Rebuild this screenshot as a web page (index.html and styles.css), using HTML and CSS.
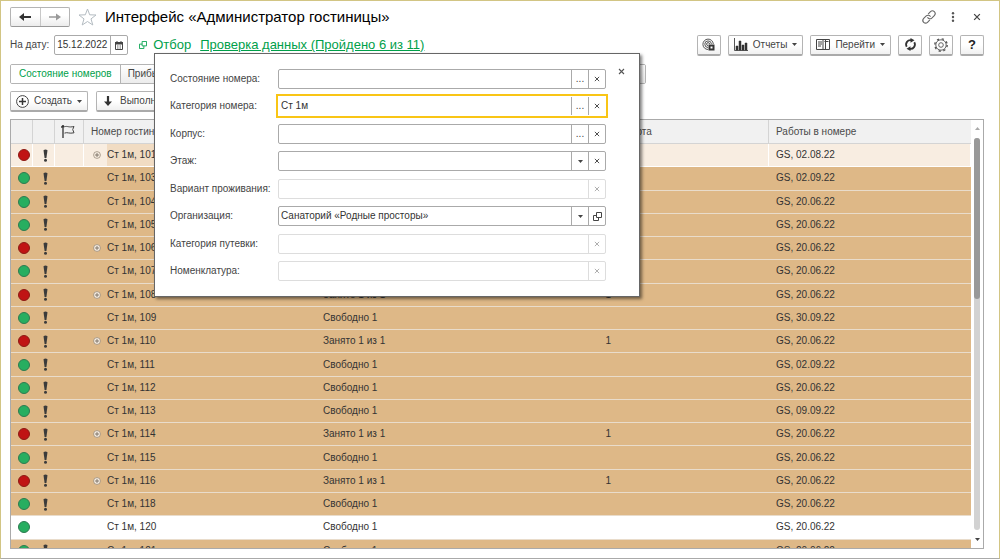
FILE: index.html
```html
<!DOCTYPE html>
<html lang="ru">
<head>
<meta charset="utf-8">
<title>Интерфейс «Администратор гостиницы»</title>
<link rel="stylesheet" href="styles.css">
</head>
<body>
<svg class="defs" aria-hidden="true">
  <symbol id="i-x" viewBox="0 0 7 7"><path d="M1 1l5 5M6 1l-5 5" fill="none" stroke="currentColor" stroke-width="1.1"/></symbol>
  <symbol id="i-down" viewBox="0 0 5 3"><path d="M0 0h5L2.500 3z" fill="currentColor"/></symbol>
  <symbol id="i-open" viewBox="0 0 9 9"><path d="M3.500.5h5v5h-5zM3.500 3.500h-3v5h5v-3" fill="none" stroke="currentColor"/></symbol>
  <symbol id="i-bang" viewBox="0 0 5 13"><path d="M.5 1.200Q2.500-.4 4.500 1.200L3.400 9H1.600z" fill="#3b3b3b"/><circle cx="2.500" cy="11.300" r="1.500" fill="#3b3b3b"/></symbol>
  <symbol id="i-plus" viewBox="0 0 8 8"><circle cx="4" cy="4" r="3.400" fill="#f8eee2" stroke="#8c8070" stroke-width=".7"/><path d="M4 2v4M2 4h4" stroke="#6b6155" stroke-width=".8"/></symbol>
</svg>
<main class="window">
  <header class="titlebar">
    <div class="nav">
      <button type="button" aria-label="Назад"><svg width="12" height="8" viewBox="0 0 12 8"><path d="M5 0v2.900h7v2.200H5V8L0 4z" fill="#333"/></svg></button>
      <button type="button" aria-label="Вперед" class="dim"><svg width="12" height="8" viewBox="0 0 12 8"><path d="M7 .5v2.700H0v1.600h7v2.700L12 4z" fill="#999"/></svg></button>
    </div>
    <button type="button" class="plain star" aria-label="В избранное"><svg width="19" height="18" viewBox="0 0 19 18"><path d="M9.500 1l2.200 5.800 6.300.2-5 3.900 1.800 6.100-5.300-3.500L4.200 17 6 10.900 1 7l6.300-.2z" fill="#fff" stroke="#b4bcc2"/></svg></button>
    <h1>Интерфейс «Администратор гостиницы»</h1>
    <div class="winicons">
      <button type="button" class="plain" aria-label="Ссылка"><svg width="14" height="14" viewBox="0 0 14 14"><g fill="none" stroke="#666" stroke-width="1.100" transform="rotate(-45 7 7)"><path d="M5.500 9.700H2.200a2.700 2.700 0 0 1 0-5.400h3.600a2.700 2.700 0 0 1 2.500 3.500"/><path d="M8.500 4.300h3.300a2.700 2.700 0 0 1 0 5.400H8.200a2.700 2.700 0 0 1-2.500-3.500"/></g></svg></button>
      <button type="button" class="plain" aria-label="Меню"><svg width="4" height="10" viewBox="0 0 4 10" fill="#555"><circle cx="2" cy="1.300" r="1.200"/><circle cx="2" cy="5" r="1.200"/><circle cx="2" cy="8.700" r="1.200"/></svg></button>
      <button type="button" class="plain" aria-label="Закрыть окно"><svg width="8" height="8"><use href="#i-x"/></svg></button>
    </div>
  </header>

  <div class="toolbar">
    <label for="date">На дату:</label>
    <div class="field date"><input id="date" type="text" value="15.12.2022"><button type="button" aria-label="Календарь"><svg width="8" height="9" viewBox="0 0 8 9"><path d="M.5 1.500h7v7h-7z" fill="#fff" stroke="#444"/><path d="M0 1h8v2.500H0zM1.500 0h1v1h-1zM5.500 0h1v1h-1z" fill="#444"/><path d="M2 5h1M3.500 5h1M5 5h1M2 7h1M3.500 7h1M5 7h1" stroke="#666"/></svg></button></div>
    <div class="links">
      <svg class="green" width="8" height="8"><use href="#i-open"/></svg>
      <a href="#filter" class="nolined">Отбор</a>
      <a href="#check">Проверка данных (Пройдено 6 из 11)</a>
    </div>
    <div class="actions">
      <button type="button" class="btn square" aria-label="Мониторинг"><svg width="13" height="13" viewBox="0 0 13 13"><g fill="none" stroke="#555"><path d="M6 11.500A5.200 5.200 0 1 1 11.300 6"/><path d="M6 9.500A3.300 3.300 0 1 1 9.400 6"/><path d="M6 7.600A1.500 1.500 0 1 1 7.600 6"/></g><rect x="6.500" y="6.500" width="6" height="6" fill="#333"/><rect x="8.500" y="8.500" width="2" height="2" fill="#fff"/></svg></button>
      <button type="button" class="btn"><svg width="14" height="13" viewBox="0 0 14 13"><path d="M.5 0v12.500H14" fill="none" stroke="#555"/><path d="M2 8h2v4H2zM5 3h2v9H5zM8 7h2v5H8zM11 5h2v7h-2z" fill="#333" stroke="#333" stroke-width=".5"/></svg>Отчеты<svg class="caret" width="5" height="3"><use href="#i-down"/></svg></button>
      <button type="button" class="btn"><svg width="14" height="11" viewBox="0 0 14 11"><path d="M.5.5h13v10H.5zM7 .5v10M9.500.5v10" fill="none" stroke="#444"/><path d="M2 3h4M2 5h4M2 7h3M8.500 2.500h4" stroke="#444"/></svg>Перейти<svg class="caret" width="5" height="3"><use href="#i-down"/></svg></button>
      <button type="button" class="btn square" aria-label="Обновить"><svg width="13" height="13" viewBox="0 0 13 13"><g fill="none" stroke="#333" stroke-width="1.800"><path d="M7.500 2.200A4.400 4.400 0 0 0 2.700 8.700"/><path d="M5.500 10.800A4.400 4.400 0 0 0 10.300 4.300"/></g><path d="M6.500 0l4 2.300-4 2.500zM6.500 8.200v4.800l-4-2.300z" fill="#333"/></svg></button>
      <button type="button" class="btn square" aria-label="Настройки"><svg width="14" height="14" viewBox="0 0 14 14"><g fill="none" stroke="#555"><circle cx="7" cy="7" r="5.200" stroke-width=".9"/><circle cx="7" cy="7" r="2.300" stroke-width=".9"/><circle cx="7" cy="7" r="6.200" stroke-width="1.400" stroke-dasharray="2.200 2.670"/></g></svg></button>
      <button type="button" class="btn square help" aria-label="Справка">?</button>
    </div>
  </div>

  <nav class="tabs">
    <button type="button" class="on">Состояние номеров</button>
    <button type="button">Прибытие</button>
    <button type="button">Проживание</button>
    <button type="button">Выезд</button>
    <button type="button">Бронирование</button>
  </nav>

  <div class="commands">
    <button type="button" class="btn"><svg width="13" height="13" viewBox="0 0 13 13"><circle cx="6.500" cy="6.500" r="5.900" fill="#fff" stroke="#444"/><path d="M6.500 3v7M3 6.500h7" stroke="#333" stroke-width="1.500"/></svg>Создать<svg class="caret" width="5" height="3"><use href="#i-down"/></svg></button>
    <button type="button" class="btn run"><svg width="8" height="10" viewBox="0 0 8 10"><path d="M2.900 0h2.200v5.500H8L4 10 0 5.500h2.900z" fill="#333"/></svg>Выполнить</button>
  </div>

  <section class="grid">
    <div class="clip">
      <table>
        <colgroup><col class="c1"><col class="c1"><col class="c3"><col><col class="cm"><col class="cm"><col class="cm"><col class="cw"></colgroup>
        <thead><tr><th></th><th></th><th><svg width="14" height="13" viewBox="0 0 14 13"><path d="M2 1v12M.3 2.500L2 .5l1.200 1.500" fill="none" stroke="#333" stroke-width="1.300"/><path d="M3.500 1.800c3-1.200 4 1 9.500-.3l-1.300 3L13 7.800c-5 1.200-6.500-1-9.500.3" fill="none" stroke="#444"/></svg></th><th class="name">Номер гостиницы</th><th>Состояние</th><th>Гостей</th><th>Карта</th><th>Работы в номере</th></tr></thead>
        <tbody id="rows"></tbody>
      </table>
    </div>
    <div class="scroll">
      <svg class="up" width="5" height="3"><use href="#i-down"/></svg>
      <div class="track"><div class="thumb"></div></div>
      <svg width="5" height="3"><use href="#i-down"/></svg>
    </div>
  </section>

  <form class="popup" id="filter">
    <button type="button" class="plain close" aria-label="Закрыть"><svg width="7" height="7"><use href="#i-x"/></svg></button>
    <div class="row"><label for="f1">Состояние номера:</label><div class="field"><input id="f1" type="text"><button type="button">...</button><button type="button" aria-label="Очистить"><svg width="6" height="6"><use href="#i-x"/></svg></button></div></div>
    <div class="row"><label for="f2">Категория номера:</label><div class="field active"><input id="f2" type="text" value="Ст 1м"><button type="button">...</button><button type="button" aria-label="Очистить"><svg width="6" height="6"><use href="#i-x"/></svg></button></div></div>
    <div class="row"><label for="f3">Корпус:</label><div class="field"><input id="f3" type="text"><button type="button">...</button><button type="button" aria-label="Очистить"><svg width="6" height="6"><use href="#i-x"/></svg></button></div></div>
    <div class="row"><label for="f4">Этаж:</label><div class="field"><input id="f4" type="text"><button type="button" aria-label="Выбрать"><svg width="5" height="3"><use href="#i-down"/></svg></button><button type="button" aria-label="Очистить"><svg width="6" height="6"><use href="#i-x"/></svg></button></div></div>
    <div class="row"><label for="f5">Вариант проживания:</label><div class="field off"><input id="f5" type="text" disabled><button type="button" disabled aria-label="Очистить"><svg width="6" height="6"><use href="#i-x"/></svg></button></div></div>
    <div class="row"><label for="f6">Организация:</label><div class="field"><input id="f6" type="text" value="Санаторий «Родные просторы»"><button type="button" aria-label="Выбрать"><svg width="5" height="3"><use href="#i-down"/></svg></button><button type="button" aria-label="Открыть"><svg width="9" height="9"><use href="#i-open"/></svg></button></div></div>
    <div class="row"><label for="f7">Категория путевки:</label><div class="field off"><input id="f7" type="text" disabled><button type="button" disabled aria-label="Очистить"><svg width="6" height="6"><use href="#i-x"/></svg></button></div></div>
    <div class="row"><label for="f8">Номенклатура:</label><div class="field off"><input id="f8" type="text" disabled><button type="button" disabled aria-label="Очистить"><svg width="6" height="6"><use href="#i-x"/></svg></button></div></div>
  </form>
</main>
<script src="rows.js"></script>
</body>
</html>
```
FILE: styles.css
```css
* { box-sizing: border-box; }
body { margin: 0; font: 10px/14px "Liberation Sans", Arial, sans-serif; color: #444; background: #fff; }
button, input { font: inherit; color: inherit; margin: 0; padding: 0; }
button { display: flex; align-items: center; justify-content: center; }
svg { display: block; flex: none; }
.defs { position: absolute; width: 0; height: 0; }
.window { position: relative; display: flex; flex-direction: column; height: 100vh; padding: 6px 15px 9px 9px; border: 1px solid #d2c584; border-bottom-color: #aaa; overflow: hidden; }
.plain { border: 0; background: none; }

.titlebar { display: flex; align-items: center; height: 20px; }
.nav { display: flex; width: 60px; height: 20px; border: 1px solid #b4b4b4; border-bottom-color: #999; border-radius: 2px; background: linear-gradient(#fff 40%, #ececec); }
.nav button { flex: 1; border: 0; background: none; }
.nav .dim { border-left: 1px solid #c8c8c8; }
.star { margin: 0 8px; }
h1 { margin: 0; font-size: 15px; line-height: 20px; font-weight: 400; color: #000; white-space: nowrap; }
.winicons { display: flex; align-items: center; gap: 10px; margin-left: auto; }
.winicons button { width: 14px; }

.toolbar { display: flex; align-items: center; height: 22px; margin-top: 7px; white-space: nowrap; }
.field { display: flex; flex: 1; min-width: 0; height: 20px; border: 1px solid #aaa; border-radius: 2px; background: #fff; }
.field input { flex: 1; min-width: 0; border: 0; outline: 0; background: none; padding: 0 2px; color: #333; }
.field button { width: 17px; border: 0; border-left: 1px solid #aaa; background: none; color: #444; }
.date { flex: none; width: 74px; margin-left: 5px; }
.links { display: flex; align-items: center; gap: 9px; margin-left: 11px; font-size: 13px; line-height: 16px; }
.links svg { margin-right: -3px; }
.links a, .green { color: #00a04a; }
.links .nolined { text-decoration: none; }
.actions { display: flex; gap: 7px; margin-left: auto; }
.btn { height: 21px; gap: 5px; padding: 0 5px; border: 1px solid #b4b4b4; border-bottom: 2px solid #aaa; border-radius: 2px; background: linear-gradient(#fff 50%, #f0f0f0); white-space: nowrap; }
.square { width: 24px; padding: 0; }
.help { font-size: 13px; font-weight: 700; color: #222; }

.tabs { display: flex; flex: none; width: 636px; height: 20px; margin-top: 8px; border: 1px solid #b4b4b4; border-radius: 2px; overflow: hidden; }
.tabs button { flex: 1; border: 0; border-left: 1px solid #b4b4b4; background: linear-gradient(#fff, #ececec); white-space: nowrap; }
.tabs button:nth-child(2) { flex: none; padding: 0 7px; }
.tabs .on { flex: none; padding: 0 8px; border-left: 0; background: #fff; color: #00a04a; }
.commands { display: flex; gap: 8px; margin-top: 7px; }
.run { gap: 8px; padding: 0 7px; }

.grid { display: flex; flex: 1; min-height: 0; margin-top: 7px; border: 1px solid #aaa; }
.clip { flex: 1; min-width: 0; overflow: hidden; }
table { width: 100%; height: 443px; border-collapse: separate; border-spacing: 0; table-layout: fixed; }
.c1 { width: 22px; }
.c3 { width: 29px; }
.cm { width: 151px; }
.cw { width: 202px; }
th, td { padding: 0 7px; text-align: left; font-weight: 400; white-space: nowrap; overflow: hidden; }
th { height: 24px; background: #f1f1f1; border-right: 1px solid #d4d4d4; border-bottom: 1px solid #d4d4d4; color: #4a4a4a; }
th:last-child { border-right: 0; }
th svg { margin-left: -1px; }
td { height: 23px; background: #deb887; border-bottom: 1px solid #e9dccb; color: #333; }
td:nth-child(1) { padding: 0 5px; }
td:nth-child(2) { padding: 0 10px; }
td:nth-child(3), td:nth-child(7) { padding: 0; }
td:nth-child(6) { text-align: right; }
td:nth-child(4) { padding: 0; }
.room { display: flex; align-items: center; height: 100%; }
.toggle { width: 23px; padding-left: 9px; }
.current td { background: #f8ede1; border-right: 1px solid #fff; border-bottom-color: #fff; }
.current .room span:last-child { flex: 1; background: #f1dcc3; line-height: 22px; }
.free td { background: #fff; }
.dot { width: 12px; height: 12px; margin-left: 2px; border: 1px solid #2d7a50; border-radius: 50%; background: #27ae60; }
.busy { border-color: #8c1a14; background: #c01414; }

.scroll { display: flex; flex-direction: column; align-items: center; gap: 8px; width: 12px; padding: 7px 0 7px; color: #444; }
.up { transform: rotate(180deg); color: #aaa; }
.track { flex: 1; width: 6px; border-radius: 3px; background: #d2d2d2; }
.thumb { height: 41%; border-radius: 3px; background: #999; }

.popup { position: absolute; left: 153px; top: 52px; display: flex; flex-direction: column; justify-content: space-between; width: 486px; min-height: 244px; padding: 15px 33px 15px 15px; border: 1px solid #666; background: #fff; box-shadow: 2px 2px 3px rgba(0, 0, 0, .5); }
.row { display: flex; align-items: center; }
.row label { width: 108px; white-space: nowrap; }
.active { outline: 2px solid #f9c515; border-color: #fff; border-radius: 0; }
.off, .off button { border-color: #ddd; }
.off button { color: #aaa; }
.close { position: absolute; right: 14px; top: 14px; color: #555; }
```
FILE: rows.js
```js
const rooms = [
  [101, 1, '02.08.22'], [103, 0, '02.09.22'], [104, 0, '20.06.22'], [105, 0, '20.06.22'],
  [106, 1, '20.06.22'], [107, 0, '20.06.22'], [108, 1, '20.06.22'], [109, 0, '30.09.22'],
  [110, 1, '20.06.22'], [111, 0, '02.09.22'], [112, 0, '20.06.22'], [113, 0, '09.09.22'],
  [114, 1, '20.06.22'], [115, 0, '20.06.22'], [116, 1, '20.06.22'], [118, 0, '20.06.22'],
  [120, 0, '20.06.22'], [121, 0, '20.06.22']
];
const plus = '<svg width="8" height="8"><use href="#i-plus"/></svg>';
const bang = '<svg width="5" height="13"><use href="#i-bang"/></svg>';
document.getElementById('rows').innerHTML = rooms.map(([room, busy, date], i) => {
  const rowClass = i === 0 ? 'current' : room === 120 ? 'free' : '';
  return `<tr class="${rowClass}"><td><div class="dot ${busy ? 'busy' : ''}"></div></td>` +
    `<td>${room === 120 ? '' : bang}</td><td></td>` +
    `<td><div class="room"><span class="toggle">${busy ? plus : ''}</span><span>Ст 1м, ${room}</span></div></td>` +
    `<td>${busy ? 'Занято 1 из 1' : 'Свободно 1'}</td><td>${busy ? 1 : ''}</td><td></td><td>GS, ${date}</td></tr>`;
}).join('');
```
